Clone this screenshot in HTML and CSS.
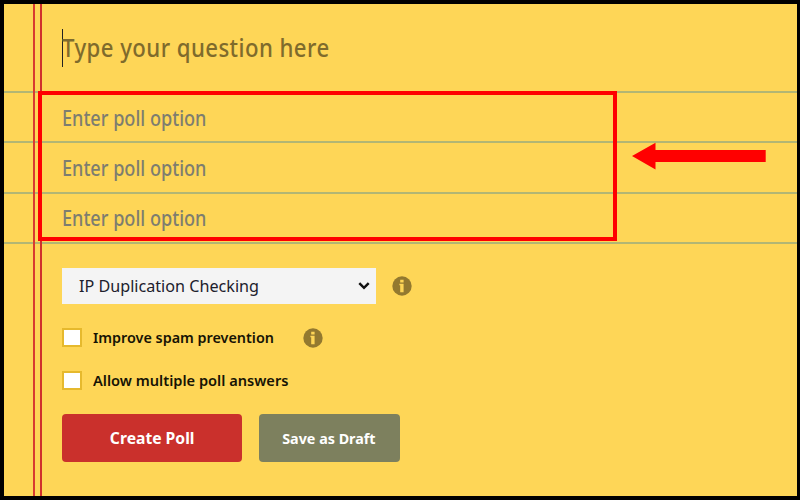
FILE: index.html
```
<!DOCTYPE html>
<html lang="en">
<head>
<meta charset="utf-8">
<title>Create a poll</title>
<link rel="stylesheet" href="styles.css">
</head>
<body>
<main class="paper">
  <div class="question row"><i class="caret"></i><span class="hand title">Type your question here</span></div>
  <div class="row option"><span class="hand">Enter poll option</span></div>
  <div class="row option"><span class="hand">Enter poll option</span></div>
  <div class="row option"><span class="hand">Enter poll option</span></div>
  <form class="settings">
    <div class="line first">
      <div class="select"><span class="t-select">IP Duplication Checking</span>
        <svg width="12" height="8" viewBox="0 0 12 8"><path d="M1.3 1.2 6 5.8l4.7-4.6" fill="none" stroke="#111" stroke-width="2.5"/></svg>
      </div>
      <svg class="info" width="20" height="20" viewBox="0 0 20 20"><circle cx="10" cy="10" r="9.7"/><path d="M8.2 3.8h3.4v2.6H8.2zM7.4 7.8h4.2v8.4H8.2V9.2h-.8z"/></svg>
    </div>
    <div class="line second">
      <span class="box"></span><span class="label t-spam">Improve spam prevention</span>
      <svg class="info" width="20" height="20" viewBox="0 0 20 20"><circle cx="10" cy="10" r="9.7"/><path d="M8.2 3.8h3.4v2.6H8.2zM7.4 7.8h4.2v8.4H8.2V9.2h-.8z"/></svg>
    </div>
    <div class="line third"><span class="box"></span><span class="label t-multi">Allow multiple poll answers</span></div>
    <div class="line buttons">
      <button type="button" class="btn create"><span>Create Poll</span></button>
      <button type="button" class="btn draft"><span>Save as Draft</span></button>
    </div>
  </form>
  <div class="margin-lines"></div>
  <div class="highlight"></div>
  <svg class="arrow" width="135" height="28" viewBox="0 0 135 28"><path d="M0 14 23.5 .8V8H133.7v12H23.5v7.5z" fill="#f00"/></svg>
</main>
</body>
</html>
```
FILE: styles.css
```
* { box-sizing: border-box; }
body { margin: 0; font-family: "Noto Sans", sans-serif; }
.paper {
  position: relative;
  width: 800px;
  height: 500px;
  border: 4px solid #000;
  border-right-width: 3px;
  background: #fed657;
  overflow: hidden;
}
.row { display: flex; align-items: center; padding-left: 58px; border-bottom: 2px solid #b2b674; white-space: nowrap; }
.question { height: 89px; }
.option { height: 50px; }
.option:nth-child(3) { height: 51px; padding-bottom: 1px; }
.option:nth-child(4) { padding-bottom: 2px; }
.hand { display: inline-block; transform: scaleX(.823); transform-origin: 0 50%; font-size: 22px; font-weight: 500; line-height: 30px; color: #7d7d70; }
.title { transform: scaleX(.854); padding-bottom: 2px; font-size: 26px; color: #7f6b2c; letter-spacing: .5px; }
.caret { width: 1px; height: 38px; margin: 0 -1px 0 0; background: #222; }
.settings { padding: 24px 0 0 58px; }
.line { display: flex; align-items: center; white-space: nowrap; }
.select {
  display: flex;
  align-items: center;
  justify-content: space-between;
  width: 314px;
  height: 36px;
  padding: 0 6px 0 17px;
  background: #f4f4f4;
  font-size: 17px;
  color: #20202c;
}
.t-select { padding-bottom: 2px; transform: scaleX(.95); transform-origin: 0 50%; }
.info { flex: none; margin-left: 16px; fill: #93792f; }
.info path { fill: #fed657; }
.second { height: 19px; margin-top: 24px; }
.third { height: 19px; margin-top: 24px; }
.box { width: 20px; height: 19px; border: 2.5px solid #e6b92d; background: #fff; }
.label { display: inline-block; margin-left: 11px; padding-bottom: 2px; transform: scaleX(.957); transform-origin: 0 50%; font-size: 15px; font-weight: 600; color: #161304; }
.t-multi { transform: scaleX(.974); }
.second .label { width: 181px; }
.second .info { margin-left: 29px; }
.buttons { gap: 17px; margin-top: 24px; }
.btn { display: flex; align-items: center; justify-content: center; height: 48px; padding: 0; border: 0; border-radius: 4px; font: 700 16px "Noto Sans", sans-serif; color: #fff; white-space: nowrap; }
.btn span { transform: scaleX(.98); }
.create { width: 180px; background: #ca302c; }
.draft { width: 141px; background: #7d805e; font-size: 15px; }
.draft span { transform: scaleX(.955); margin-right: 2px; }
.margin-lines { position: absolute; top: 0; bottom: 0; left: 29px; width: 9px; border-left: 2px solid #d83b30; border-right: 2px solid #d0312c; }
.highlight { position: absolute; left: 34px; top: 87px; width: 579px; height: 150px; border: 4px solid #f00; }
.arrow { position: absolute; left: 628px; top: 138px; }
```
